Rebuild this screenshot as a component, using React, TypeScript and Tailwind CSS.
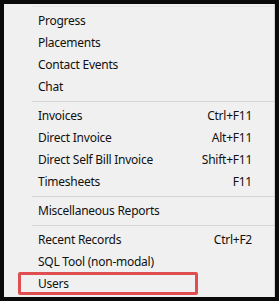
import React from 'react';

type Item = { label: string; shortcut?: string };

const groups: Item[][] = [
  [{ label: 'Progress' }, { label: 'Placements' }, { label: 'Contact Events' }, { label: 'Chat' }],
  [
    { label: 'Invoices', shortcut: 'Ctrl+F11' },
    { label: 'Direct Invoice', shortcut: 'Alt+F11' },
    { label: 'Direct Self Bill Invoice', shortcut: 'Shift+F11' },
    { label: 'Timesheets', shortcut: 'F11' },
  ],
  [{ label: 'Miscellaneous Reports' }],
  [{ label: 'Recent Records', shortcut: 'Ctrl+F2' }, { label: 'SQL Tool (non-modal)' }, { label: 'Users' }],
];

function Row({ item }: { item: Item }) {
  return (
    <div className="flex h-[22px] items-center justify-between pl-[34px] pr-[22px]">
      <span>{item.label}</span>
      {item.shortcut && <span>{item.shortcut}</span>}
    </div>
  );
}

export default function App() {
  return (
    <div className="relative h-[301px] w-[279px] bg-[#0a0a0a] p-[4px] font-['Noto_Sans',sans-serif] text-[12px] tracking-[-0.25px] text-[#111]">
      <div className="h-[293px] w-[271px] border-r border-[#d0d0d0] bg-[#f0f0f0] pt-[6px]">
        <div className="ml-[28px] -mt-[4px] mb-[3px] h-px bg-[#e3e3e3]" />
        {groups.map((g, i) => (
          <div key={i}>
            {i > 0 && (
              <div className="flex h-[7px] items-center pl-[28px]">
                <div className="h-px w-full bg-[#d5d5d5]" />
              </div>
            )}
            {g.map((item) => (
              <Row key={item.label} item={item} />
            ))}
          </div>
        ))}
      </div>
      <div className="absolute left-[18px] top-[272px] h-[23px] w-[180px] rounded-[2px] border-[3px] border-[#df4f52]" />
    </div>
  );
}
